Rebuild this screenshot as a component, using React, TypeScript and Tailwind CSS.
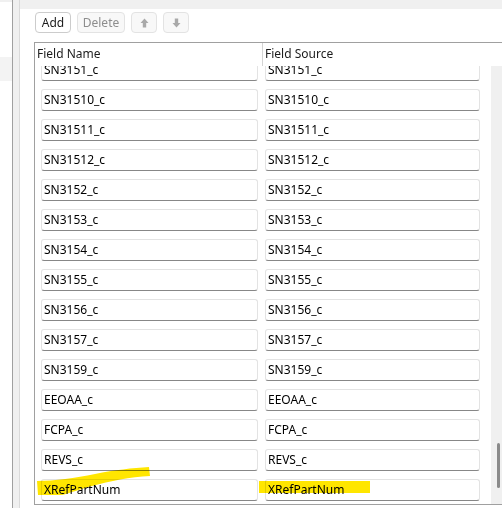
import React from "react";

const rows = [
  "SN3151_c",
  "SN31510_c",
  "SN31511_c",
  "SN31512_c",
  "SN3152_c",
  "SN3153_c",
  "SN3154_c",
  "SN3155_c",
  "SN3156_c",
  "SN3157_c",
  "SN3159_c",
  "EEOAA_c",
  "FCPA_c",
  "REVS_c",
  "XRefPartNum",
];

function Cell({ text, w, highlight }: { text: string; w: string; highlight?: boolean }) {
  return (
    <div
      className={`${w} relative h-[22px] bg-white border border-[#e3e3e3] border-b-[#878787] rounded-[3px] flex items-center pl-[2px] text-[12px] text-black leading-none`}
    >
      {highlight && (
        <div className="absolute left-[-7px] top-[1px] w-[111px] h-[12px] bg-[#ffe600] mix-blend-multiply" />
      )}
      <span className="relative">{text}</span>
    </div>
  );
}

function UpArrow() {
  return (
    <svg width="9" height="10" viewBox="0 0 9 10">
      <path d="M4.5 0.5 L8.5 5 H6.2 V9.5 H2.8 V5 H0.5 Z" fill="#a9a9a9" />
    </svg>
  );
}

function DownArrow() {
  return (
    <svg width="9" height="10" viewBox="0 0 9 10">
      <path d="M4.5 9.5 L8.5 5 H6.2 V0.5 H2.8 V5 H0.5 Z" fill="#a9a9a9" />
    </svg>
  );
}

export default function App() {
  return (
    <div
      className="relative w-[502px] h-[508px] bg-white flex overflow-hidden"
      style={{ fontFamily: '"Segoe UI", "Noto Sans", sans-serif' }}
    >
      {/* left strip */}
      <div className="w-[12px] h-full bg-white flex flex-col">
        <div className="h-[2px] bg-[#f0f0f0]" />
        <div className="h-[55px]" />
        <div className="h-[24px] bg-[#f3f3f3]" />
      </div>
      <div className="w-px h-full bg-[#a0a0a0]" />
      <div className="w-[6px] h-full bg-[#f0f0f0]" />
      <div className="w-px h-full bg-[#dadada]" />

      {/* main */}
      <div className="flex-1 flex flex-col min-w-0">
        <div className="h-[9px] bg-[#f0f0f0] shrink-0" />
        <div className="flex gap-[6px] pl-[15px] pt-[3px] h-[24px] shrink-0">
          <button className="w-[36px] h-[21px] bg-white border border-[#cccccc] rounded-[4px] text-[12px] text-[#1b1b1b] leading-none flex items-center justify-center">
            Add
          </button>
          <button className="w-[48px] h-[21px] bg-[#f8f8f8] border border-[#e3e3e3] rounded-[4px] text-[12px] text-[#8d8d8d] leading-none flex items-center justify-center">
            Delete
          </button>
          <button className="w-[26px] h-[21px] bg-[#f8f8f8] border border-[#e3e3e3] rounded-[4px] flex items-center justify-center">
            <UpArrow />
          </button>
          <button className="w-[26px] h-[21px] bg-[#f8f8f8] border border-[#e3e3e3] rounded-[4px] flex items-center justify-center">
            <DownArrow />
          </button>
        </div>

        {/* table */}
        <div className="ml-[14px] mt-[9px] h-[463px] border-l border-t border-b border-[#a0a0a0] flex flex-col shrink-0">
          <div className="h-[23px] flex text-[12px] text-[#1b1b1b] leading-none shrink-0 bg-white">
            <div className="w-[227px] pl-[2px] pt-[5px]">Field Name</div>
            <div className="w-px h-full bg-[#d4d4d4]" />
            <div className="flex-1 pl-[2px] pt-[5px]">Field Source</div>
          </div>
          <div className="flex-1 flex overflow-hidden">
            <div className="w-[456px] overflow-hidden">
              <div className="mt-[-12px] flex flex-col">
                {rows.map((r, i) => (
                  <div key={r} className="h-[30px] pt-[5px] flex pl-[6px] gap-[7px]">
                    <Cell text={r} w="w-[217px]" />
                    <Cell text={r} w="w-[215px]" highlight={i === rows.length - 1} />
                  </div>
                ))}
              </div>
            </div>
            <div className="w-[11px] bg-[#f0f0f0] flex flex-col">
              <div className="mt-[377px] ml-[6px] w-[3px] h-[45px] rounded-full bg-[#8a8a8a]" />
            </div>
          </div>
        </div>
      </div>

      {/* highlighter stroke on left column */}
      <svg
        className="absolute left-0 top-0 pointer-events-none mix-blend-multiply"
        width="502"
        height="508"
        viewBox="0 0 502 508"
      >
        <path
          d="M37 481 C55 481 75 478 95 474 C115 470 132 468 149 467 L150 476 C130 477 110 481 92 486 C80 489 70 493 62 495 L38 495 Z"
          fill="#ffe600"
        />
      </svg>
    </div>
  );
}
